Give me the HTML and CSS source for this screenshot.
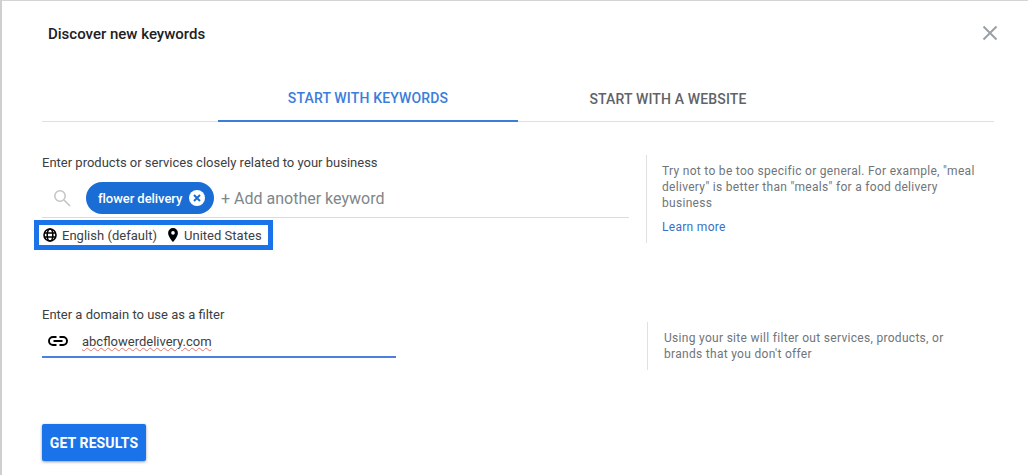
FILE: index.html
```html
<!DOCTYPE html>
<html lang="en">
<head>
<meta charset="utf-8">
<title>Discover new keywords</title>
<link rel="stylesheet" href="styles.css">
</head>
<body>
<main class="dialog">
  <header class="head">
    <h1 class="title">Discover new keywords</h1>
    <svg class="close" width="16" height="16" viewBox="0 0 16 16"><path d="M1.500 1.500l13 13M14.500 1.500l-13 13" stroke="#9aa0a6" stroke-width="2" fill="none"/></svg>
  </header>
  <nav class="tabs">
    <div class="tab active">START WITH KEYWORDS</div>
    <div class="tab">START WITH A WEBSITE</div>
  </nav>
  <section class="row row-keywords">
    <div class="main-col">
      <div class="label">Enter products or services closely related to your business</div>
      <div class="kw-input">
        <svg class="search" width="18" height="18" viewBox="0 0 18 18"><circle cx="7" cy="7" r="5.2" fill="none" stroke="#c4c4c4" stroke-width="1.5"/><path d="M11 11l6 6" stroke="#c4c4c4" stroke-width="1.6"/></svg>
        <div class="chip">
          <span>flower delivery</span>
          <svg width="16" height="16" viewBox="0 0 16 16"><circle cx="8" cy="8" r="8" fill="#fff"/><path d="M5 5l6 6M11 5l-6 6" stroke="#1a6dd4" stroke-width="2"/></svg>
        </div>
        <span class="placeholder">+ Add another keyword</span>
      </div>
      <div class="targets">
        <svg width="14" height="14" viewBox="0 0 14 14"><circle cx="7" cy="7" r="6" fill="none" stroke="#000" stroke-width="1.600"/><ellipse cx="7" cy="7" rx="2.800" ry="6" fill="none" stroke="#000" stroke-width="1.500"/><path d="M1 5h12M1 9h12" stroke="#000" stroke-width="1.500"/></svg>
        <span class="lang">English (default)</span>
        <svg class="pin" width="10" height="14" viewBox="0 0 10 14"><path fill-rule="evenodd" d="M5 0a4.900 4.900 0 0 0-4.900 4.900C.1 8.500 5 14 5 14s4.900-5.500 4.900-9.100A4.900 4.900 0 0 0 5 0zm0 6.700a1.800 1.800 0 1 1 0-3.600 1.800 1.800 0 0 1 0 3.600z"/></svg>
        <span>United States</span>
      </div>
    </div>
    <aside class="hint hint-keywords">
      <p>Try not to be too specific or general. For example, "meal delivery" is better than "meals" for a food delivery business</p>
      <a class="learn" href="#">Learn more</a>
    </aside>
  </section>
  <section class="row row-domain">
    <div class="main-col">
      <div class="label">Enter a domain to use as a filter</div>
      <div class="domain-input">
        <svg width="20" height="10" viewBox="0 0 20 10"><path d="M8.500 1H5a4 4 0 0 0 0 8h3.500M11.500 1H15a4 4 0 0 1 0 8h-3.500M5.500 5h9" fill="none" stroke="#000" stroke-width="1.900"/></svg>
        <span class="domain">abcflowerdelivery.com</span>
      </div>
    </div>
    <aside class="hint hint-domain">
      <p>Using your site will filter out services, products, or brands that you don't offer</p>
    </aside>
  </section>
  <button class="submit">GET RESULTS</button>
</main>
</body>
</html>
```
FILE: styles.css
```css
* { box-sizing: border-box; }
html, body { margin: 0; height: 100%; background: #fff; }
body { font-family: Roboto, "Liberation Sans", sans-serif; overflow: hidden; }
.dialog {
  height: 475px;
  border-top: 1px solid #d4d4d4;
  border-left: 2px solid #cfcfcf;
  padding: 0 34px 0 40px;
}
.head { display: flex; justify-content: space-between; align-items: center; height: 64px; padding-left: 6px; margin-right: -4px; }
.title { margin: 1px 0 0; font-size: 15px; font-weight: 500; color: #202124; }
.tabs { display: flex; height: 57px; padding-left: 176px; border-bottom: 1px solid #e0e0e0; }
.tab { width: 300px; height: 57px; display: flex; align-items: center; justify-content: center; font-size: 14px; letter-spacing: .15px; font-weight: 500; color: #5f6368; padding-top: 10px; }
.tab.active { color: #3b7ddb; border-bottom: 2px solid #3b7ddb; padding-top: 10px; }
.row { display: flex; }
.main-col { width: 587px; }
.label { font-size: 13px; line-height: 18px; margin-bottom: -2px; color: #3c4043; }
.row-keywords { margin-top: 32px; height: 152px; }
.kw-input { display: flex; align-items: center; height: 44px; margin-top: 4px; border-bottom: 1px solid #dadce0; padding: 8px 0 3px 11px; }
.search { margin-right: 15px; }
.chip { display: flex; align-items: center; gap: 7px; height: 32px; width: 128px; padding: 0 8px 0 12px; border-radius: 16px; background: #1a6dd4; color: #fff; font-size: 13px; letter-spacing: -.05px; font-weight: 500; white-space: nowrap; }
.placeholder { margin-left: 7px; font-size: 16px; color: #80868b; }
.targets { display: flex; align-items: center; width: 239px; height: 30px; margin: 2px 0 0 -8px; padding-left: 4px; border: 5px solid #1a73e8; font-size: 13px; letter-spacing: .02px; color: #3c4043; }
.lang { margin-left: 5px; margin-right: 11px; }
.pin { margin-right: 6px; }
.hint { border-left: 1px solid #e0e0e0; font-size: 12px; letter-spacing: .3px; line-height: 16px; color: #70757a; }
.hint p { margin: 0; }
.hint-keywords { width: 333px; height: 88px; margin: 1px 0 0 17px; padding: 8px 0 0 15px; }
.learn { display: block; margin-top: 8px; color: #3b6fc4; text-decoration: none; }
.row-domain { height: 118px; }
.domain-input { display: flex; align-items: center; width: 354px; height: 34px; margin-top: 2px; padding: 2px 0 0 6px; gap: 14px; border-bottom: 2px solid #4a80de; }
.domain { font-size: 13px; color: #3c4043; text-decoration: underline wavy #e2766c 1px; text-underline-offset: 1px; }
.hint-domain { width: 333px; height: 48px; margin: 16px 0 0 18px; padding: 8px 0 0 16px; }
.submit { display: block; width: 104px; height: 37px; border: 0; border-radius: 2px; background: #1a73e8; color: #fff; font: 700 14px Roboto, sans-serif; letter-spacing: .1px; box-shadow: 0 1px 3px rgba(0,0,0,.4); padding: 0; }
```
